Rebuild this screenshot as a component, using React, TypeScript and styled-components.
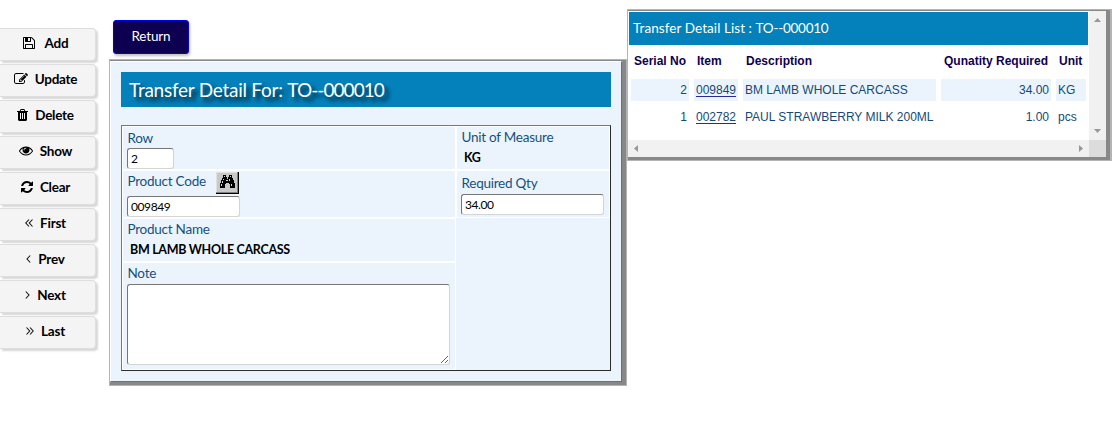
import React from "react";
import styled, { createGlobalStyle } from "styled-components";

const GlobalStyle = createGlobalStyle`
  * { box-sizing: border-box; }
  body { margin: 0; background: #fff; font-family: Lato, "Open Sans", sans-serif; overflow: hidden; }
`;

const Page = styled.div`
  display: flex;
  align-items: flex-start;
  width: 1112px;
  height: 425px;
`;

const Sidebar = styled.nav`
  display: flex;
  flex-direction: column;
  gap: 3px;
  width: 97px;
  padding-top: 28px;
`;

const SideButton = styled.button`
  display: flex;
  align-items: center;
  justify-content: center;
  width: 96px;
  height: 33px;
  padding: 0 4px 3px 0;
  border: 1px solid #dedede;
  border-left: 0;
  border-radius: 0 4px 4px 0;
  background: #f4f4f4;
  box-shadow: 2px 2px 2px rgba(0, 0, 0, 0.16);
  color: #000;
  font: 700 13.5px/20px Lato, sans-serif;
`;

const SideLabel = styled.span<{ $gap: number }>`
  margin-left: ${(p) => p.$gap}px;
  letter-spacing: -0.25px;
`;

const Main = styled.main`
  width: 518px;
  margin-left: 12px;
  padding-top: 20px;
`;

const ReturnButton = styled.button`
  display: block;
  width: 76px;
  height: 34px;
  margin: 0 0 5px 4px;
  padding: 0 0 2px;
  border: 1px solid #0000f0;
  border-radius: 3px;
  background: #0d0050;
  box-shadow: 1px 2px 3px rgba(0, 0, 0, 0.25);
  color: #fff;
  font: 400 13.5px/20px Lato, sans-serif;
  letter-spacing: -0.15px;
`;

const Frame = styled.section`
  border: 1px solid #b4b4b4;
`;

const FrameEdge = styled.div`
  border-style: solid;
  border-color: #888;
  border-width: 1px 4px 3px 0;
`;

const FormBody = styled.div`
  height: 321px;
  padding: 10px;
  border: 1px solid;
  border-color: #fff #8a6a4c #8a6a4c #fff;
  background: #ebf4fc;
`;

const Title = styled.h1`
  height: 35px;
  margin: 0 0 18px;
  padding-left: 8px;
  background: #0480bb;
  color: #fff;
  font: 400 19px/36px Lato, sans-serif;
  letter-spacing: -0.25px;
  text-shadow: 4px 4px 4px rgba(0, 0, 0, 0.8);
  white-space: nowrap;
`;

const OrderNo = styled.span<{ $spacing: number }>`
  letter-spacing: ${(p) => p.$spacing}px;
`;

const Fields = styled.div`
  display: grid;
  grid-template-columns: 332px 152px;
  grid-template-rows: 42px 46px 42px 106px;
  gap: 2px;
  width: 490px;
  padding: 1px;
  border: 1px solid;
  border-color: #777 #2b2b2b #2b2b2b #777;
  background: #fff;
`;

const Cell = styled.div<{ $top: number }>`
  padding: ${(p) => p.$top}px 0 0 4px;
  background: #ebf4fc;
`;

const EmptyCell = styled.div`
  grid-column: 2;
  grid-row: 3 / span 2;
  margin: -1px;
  background: #ebf4fc;
`;

const Label = styled.div<{ $height?: number }>`
  height: ${(p) => p.$height ?? 19}px;
  padding-left: 0.5px;
  color: #16507f;
  font-size: 13.5px;
  line-height: 18px;
  letter-spacing: -0.25px;
  white-space: nowrap;
`;

const Value = styled.div`
  padding: 2px 0 0 3px;
  color: #000;
  font-size: 12.5px;
  font-weight: 700;
  line-height: 18px;
  letter-spacing: -0.31px;
`;

const Input = styled.input<{ $width: number }>`
  display: block;
  width: ${(p) => p.$width}px;
  height: 21px;
  padding: 1px 3px;
  border: 1px solid;
  border-color: #767676 #d4d4d4 #d4d4d4 #767676;
  border-radius: 3px;
  background: #fff;
  color: #000;
  font: 400 12px/16px Lato, sans-serif;
  letter-spacing: -0.4px;
  outline: none;
`;

const Note = styled.textarea`
  display: block;
  width: 323px;
  height: 81px;
  margin-top: 1px;
  border: 1px solid;
  border-color: #767676 #d4d4d4 #d4d4d4 #767676;
  border-radius: 3px;
  background: #fff;
  outline: none;
`;

const CodeRow = styled.div`
  display: grid;
  grid-template-columns: 89px 23px;
  align-items: start;
  height: 25px;
  padding-top: 1px;
`;

const FindButton = styled.button`
  display: flex;
  align-items: center;
  justify-content: center;
  width: 23px;
  height: 22px;
  padding: 0 1px 2px 0;
  border: 0;
  border-right: 1px solid #000;
  border-bottom: 1px solid #000;
  background: #c8c8c8;
  box-shadow: inset -1px -1px #808080, inset 1px 1px #e0e0e0;
`;

const ListFrame = styled(Frame)`
  width: 485px;
  margin-top: 9px;
  border-right-width: 2px;
`;

const ListEdge = styled.div`
  display: grid;
  grid-template-columns: 461px 17px;
  grid-template-rows: 129px 17px;
  border-style: solid;
  border-color: #888;
  border-width: 1px 4px 3px 0;
`;

const ListView = styled.div`
  padding: 1px 1px 0;
  background: #fff;
`;

const ListTitle = styled.h2`
  height: 33px;
  margin: 0;
  padding-left: 4px;
  background: #0480bb;
  color: #fff;
  font: 400 13.5px/33px Lato, sans-serif;
  letter-spacing: 0.07px;
`;

const Table = styled.div`
  display: grid;
  grid-template-columns: 58px 44px 193px 110px 30px;
  grid-template-rows: 29px 22px 22px;
  gap: 5px;
  padding: 0 2px;
  font: 12px/22px "Liberation Sans", Arial, sans-serif;
  color: #144a78;
  white-space: nowrap;
`;

const Head = styled.div<{ $align?: string }>`
  padding: 0 3px;
  color: #0d0050;
  font-weight: 700;
  line-height: 32px;
  text-align: ${(p) => p.$align ?? "left"};
`;

const Data = styled.div<{ $right?: boolean; $shade?: boolean }>`
  padding: 0 2px;
  background: ${(p) => (p.$shade ? "#ebf4fc" : "#fff")};
  text-align: ${(p) => (p.$right ? "right" : "left")};
`;

const ItemLink = styled.a`
  color: #144a78;
  text-decoration: underline;
  text-decoration-color: #2a2a90;
  text-underline-offset: 2px;
`;

const Track = styled.div<{ $vertical?: boolean }>`
  display: flex;
  flex-direction: ${(p) => (p.$vertical ? "column" : "row")};
  align-items: center;
  justify-content: space-between;
  padding: ${(p) => (p.$vertical ? "7px 0" : "0 6px")};
  background: #f1f1f1;
`;

const Corner = styled.div`
  background: #dcdcdc;
`;

const arrows = {
  up: "0,4 7,4 3.5,0",
  down: "0,0 7,0 3.5,4",
  left: "4,0 4,7 0,3.5",
  right: "0,0 0,7 4,3.5",
};

const Arrow = ({ dir }: { dir: keyof typeof arrows }) => {
  const flat = dir === "up" || dir === "down";
  return (
    <svg width={flat ? 7 : 4} height={flat ? 4 : 7}>
      <polygon points={arrows[dir]} fill="#989898" />
    </svg>
  );
};

const solid = {
  save: { box: "0 0 1536 1792", w: 12, d: "M384 1536h768v-384h-768v384zM1280 1536h128v-896q0-14-10-38.5t-20-34.5l-281-281q-10-10-34-20t-39-10v416q0 40-28 68t-68 28h-576q-40 0-68-28t-28-68v-416h-128v1280h128v-416q0-40 28-68t68-28h832q40 0 68 28t28 68v416zM896 608v-320q0-13-9.5-22.5t-22.5-9.5h-192q-13 0-22.5 9.5t-9.5 22.5v320q0 13 9.5 22.5t22.5 9.5h192q13 0 22.5-9.5t9.5-22.5zM1536 640v928q0 40-28 68t-68 28h-1344q-40 0-68-28t-28-68v-1344q0-40 28-68t68-28h928q40 0 88 20t76 48l280 280q28 28 48 76t20 88z" },
  edit: { box: "0 0 1792 1792", w: 14, d: "M888 1184l116-116-152-152-116 116v56h96v96h56zm440-720q-16-16-33 1l-350 350q-17 17-1 33t33-1l350-350q17-17 1-33zm80 594v190q0 119-84.5 203.5t-203.5 84.5h-832q-119 0-203.5-84.5t-84.5-203.5v-832q0-119 84.5-203.5t203.5-84.5h832q63 0 117 25 15 7 18 23 3 17-9 29l-49 49q-14 14-32 8-23-6-45-6h-832q-66 0-113 47t-47 113v832q0 66 47 113t113 47h832q66 0 113-47t47-113v-126q0-13 9-22l64-64q15-15 35-7t20 29zm-96-738l288 288-672 672h-288v-288zm444 132l-92 92-288-288 92-92q28-28 68-28t68 28l152 152q28 28 28 68t-28 68z" },
  trash: { box: "192 0 1408 1792", w: 11, d: "M704 1376v-704q0-14-9-23t-23-9h-64q-14 0-23 9t-9 23v704q0 14 9 23t23 9h64q14 0 23-9t9-23zm256 0v-704q0-14-9-23t-23-9h-64q-14 0-23 9t-9 23v704q0 14 9 23t23 9h64q14 0 23-9t9-23zm256 0v-704q0-14-9-23t-23-9h-64q-14 0-23 9t-9 23v704q0 14 9 23t23 9h64q14 0 23-9t9-23zm-544-992h448l-48-117q-7-9-17-11h-317q-10 2-17 11zm928 32v64q0 14-9 23t-23 9h-96v948q0 83-47 143.5t-113 60.5h-832q-66 0-113-58.5t-47-141.5v-952h-96q-14 0-23-9t-9-23v-64q0-14 9-23t23-9h309l70-167q15-37 54-63t79-26h320q40 0 79 26t54 63l70 167h309q14 0 23 9t9 23z" },
  eye: { box: "0 64 1792 1792", w: 14, d: "M1664 960q-152-236-381-353 61 104 61 225 0 185-131.5 316.5t-316.5 131.5-316.5-131.5-131.5-316.5q0-121 61-225-229 117-381 353 133 205 333.5 326.5t434.5 121.5 434.5-121.5 333.5-326.5zm-720-384q0-20-14-34t-34-14q-125 0-214.5 89.5t-89.5 214.5q0 20 14 34t34 14 34-14 14-34q0-86 61-147t147-61q20 0 34-14t14-34zm848 384q0 34-20 69-140 230-376.5 368.5t-499.5 138.5-499.5-139-376.5-368q-20-35-20-69t20-69q140-229 376.5-368t499.5-139 499.5 139 376.5 368q20 35 20 69z" },
  refresh: { box: "128 0 1536 1792", w: 12, d: "M1639 1056q0 5-1 7-64 268-268 434.5t-478 166.5q-146 0-282.5-55t-243.5-157l-129 129q-19 19-45 19t-45-19-19-45v-448q0-26 19-45t45-19h448q26 0 45 19t19 45-19 45l-137 137q71 66 161 102t187 36q134 0 250-65t186-179q11-17 53-117 8-23 30-23h192q13 0 22.5 9.5t9.5 22.5zm25-800v448q0 26-19 45t-45 19h-448q-26 0-45-19t-19-45 19-45l138-138q-148-137-349-137-134 0-250 65t-186 179q-11 17-53 117-8 23-30 23h-199q-13 0-22.5-9.5t-9.5-22.5v-7q65-268 270-434.5t480-166.5q146 0 284 55.5t245 156.5l130-129q19-19 45-19t45 19 19 45z" },
};

const angles = {
  first: { w: 8, d: "M4 .5L.8 4L4 7.5M7.5 .5L4.3 4L7.5 7.5" },
  prev: { w: 5, d: "M4.2 .5L1 4L4.2 7.5" },
  next: { w: 5, d: "M.8 .5L4 4L.8 7.5" },
  last: { w: 8, d: "M.5 .5L3.7 4L.5 7.5M4 .5L7.2 4L4 7.5" },
};

const SolidIcon = ({ name }: { name: keyof typeof solid }) => (
  <svg width={solid[name].w} height="14" viewBox={solid[name].box}>
    <path d={solid[name].d} />
  </svg>
);

const AngleIcon = ({ name }: { name: keyof typeof angles }) => (
  <svg width={angles[name].w} height="8" viewBox={`0 0 ${angles[name].w} 8`} fill="none" stroke="#111" strokeWidth="1.1">
    <path d={angles[name].d} />
  </svg>
);

const Binoculars = () => (
  <svg width="16" height="14" viewBox="0 0 16 14" shapeRendering="crispEdges">
    <path d="M4 0h3v2h1v2h1v-2h1v-2h3v3h1v2h1v3h1v5h-5v-4h-1v-1h-3v1h-1v4h-5v-5h1v-3h1v-2h1z" />
    <path d="M5 1h1v1h-1zM11 1h1v1h-1zM4 4h1v1h-1zM3 6h1v2h-1zM2 9h1v2h-1zM10 4h1v2h-1zM7 5h2v1h-2zM12 9h1v2h-1z" fill="#d5d5d5" />
  </svg>
);

const actions = [
  { label: "Add", icon: <SolidIcon name="save" />, gap: 10 },
  { label: "Update", icon: <SolidIcon name="edit" />, gap: 7 },
  { label: "Delete", icon: <SolidIcon name="trash" />, gap: 7 },
  { label: "Show", icon: <SolidIcon name="eye" />, gap: 7 },
  { label: "Clear", icon: <SolidIcon name="refresh" />, gap: 7 },
  { label: "First", icon: <AngleIcon name="first" />, gap: 7 },
  { label: "Prev", icon: <AngleIcon name="prev" />, gap: 7 },
  { label: "Next", icon: <AngleIcon name="next" />, gap: 7 },
  { label: "Last", icon: <AngleIcon name="last" />, gap: 7 },
];

const rows = [
  { serial: 2, item: "009849", description: "BM LAMB WHOLE CARCASS", qty: "34.00", unit: "KG" },
  { serial: 1, item: "002782", description: "PAUL STRAWBERRY MILK 200ML", qty: "1.00", unit: "pcs" },
];

export default function App() {
  return (
    <Page>
      <GlobalStyle />
      <Sidebar>
        {actions.map((a) => (
          <SideButton key={a.label}>
            {a.icon}
            <SideLabel $gap={a.gap}>{a.label}</SideLabel>
          </SideButton>
        ))}
      </Sidebar>
      <Main>
        <ReturnButton>Return</ReturnButton>
        <Frame>
          <FrameEdge>
            <FormBody>
              <Title>
                Transfer Detail For: <OrderNo $spacing={-0.95}>TO--000010</OrderNo>
              </Title>
              <Fields>
                <Cell $top={2}>
                  <Label>Row</Label>
                  <Input $width={47} defaultValue="2" />
                </Cell>
                <Cell $top={1}>
                  <Label>Unit of Measure</Label>
                  <Value>KG</Value>
                </Cell>
                <Cell $top={0}>
                  <CodeRow>
                    <Label>Product Code</Label>
                    <FindButton aria-label="Find product">
                      <Binoculars />
                    </FindButton>
                  </CodeRow>
                  <Input $width={113} defaultValue="009849" />
                </Cell>
                <Cell $top={3}>
                  <Label $height={20}>Required Qty</Label>
                  <Input $width={143} defaultValue="34.00" />
                </Cell>
                <Cell $top={1}>
                  <Label>Product Name</Label>
                  <Value>BM LAMB WHOLE CARCASS</Value>
                </Cell>
                <Cell $top={1}>
                  <Label>Note</Label>
                  <Note />
                </Cell>
                <EmptyCell />
              </Fields>
            </FormBody>
          </FrameEdge>
        </Frame>
      </Main>
      <ListFrame>
        <ListEdge>
          <ListView>
            <ListTitle>
              Transfer Detail List : <OrderNo $spacing={-0.25}>TO--000010</OrderNo>
            </ListTitle>
            <Table>
              <Head $align="center">Serial No</Head>
              <Head>Item</Head>
              <Head>Description</Head>
              <Head $align="right">Qunatity Required</Head>
              <Head>Unit</Head>
              {rows.map((r, i) => (
                <React.Fragment key={r.item}>
                  <Data $right $shade={i === 0}>{r.serial}</Data>
                  <Data $shade={i === 0}><ItemLink>{r.item}</ItemLink></Data>
                  <Data $shade={i === 0}>{r.description}</Data>
                  <Data $right $shade={i === 0}>{r.qty}</Data>
                  <Data $shade={i === 0}>{r.unit}</Data>
                </React.Fragment>
              ))}
            </Table>
          </ListView>
          <Track $vertical>
            <Arrow dir="up" />
            <Arrow dir="down" />
          </Track>
          <Track>
            <Arrow dir="left" />
            <Arrow dir="right" />
          </Track>
          <Corner />
        </ListEdge>
      </ListFrame>
    </Page>
  );
}
